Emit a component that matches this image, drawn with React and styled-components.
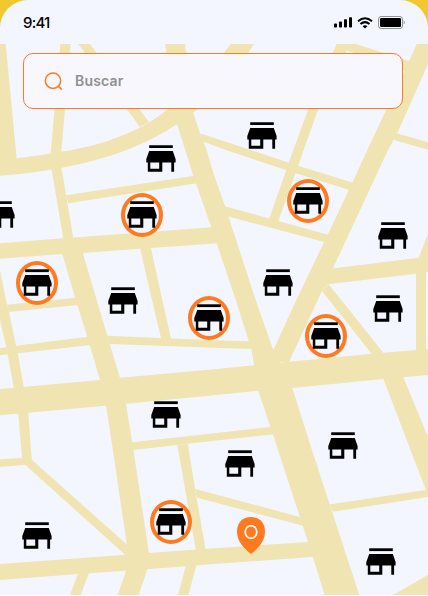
import React from 'react';
import styled, { createGlobalStyle, css } from 'styled-components';

const GlobalStyle = createGlobalStyle`
  *, *::before, *::after { box-sizing: border-box; }
  html, body { margin: 0; padding: 0; background: #fff; }
`;

const colors = {
  land: '#f3f6ff',
  road: '#f0e5b2',
  accent: '#ff7a1f',
  field: '#f8f7fd',
  backdrop: '#f1c92f',
};

const Backdrop = styled.div`
  width: 428px;
  height: 595px;
  background: ${colors.backdrop};
`;

const Screen = styled.main`
  display: flex;
  flex-direction: column;
  height: 100%;
  overflow: hidden;
  background: ${colors.land};
  border-radius: 28px 28px 0 0;
  font-family: Inter, 'Liberation Sans', sans-serif;
`;

const StatusBar = styled.header`
  display: flex;
  flex: none;
  align-items: center;
  justify-content: space-between;
  height: 44px;
  padding: 1px 23px 0 23px;
`;

const Clock = styled.time`
  font-size: 15px;
  font-weight: 550;
  line-height: 18px;
  letter-spacing: -0.8px;
  color: #000;
`;

const StatusIcons = styled.div`
  display: flex;
  align-items: center;
  gap: 5px;
  svg { display: block; }
`;

const MapArea = styled.section`
  position: relative;
  flex: none;
  height: 551px;
  padding: 9px 25px 0 23px;
  overflow: hidden;
`;

const Streets = styled.svg`
  position: absolute;
  inset: 0;
  display: block;
  fill: ${colors.road};
`;

const SearchField = styled.label`
  position: relative;
  display: flex;
  align-items: center;
  gap: 11px;
  height: 56px;
  padding: 0 20px;
  background: ${colors.field};
  border: 1px solid ${colors.accent};
  border-radius: 10px;
  svg { display: block; flex: none; }
`;

const SearchInput = styled.input`
  flex: 1;
  min-width: 0;
  padding: 0;
  border: 0;
  outline: 0;
  background: transparent;
  font-family: inherit;
  font-size: 14px;
  font-weight: 600;
  line-height: 20px;
  letter-spacing: 0.2px;
  color: #333;
  &::placeholder { color: #909090; opacity: 1; }
`;

const Marker = styled.div`
  position: absolute;
  left: ${(p) => p.$x}px;
  top: ${(p) => p.$y - 44}px;
  svg { display: block; }
  ${(p) => p.$active && css`
    width: 42px;
    height: 44px;
    padding: 4px 0 0 2.2px;
    border: 4px solid ${colors.accent};
    border-radius: 50%;
    background: ${colors.land};
  `}
`;

const roads = [
  '0,44 5.7,44 16.7,159 0,164',
  '60.3,44 70.7,44 61.3,152 61.5,168 73.3,238 63.3,239 51.7,170 50.7,153',
  '78.3,44 90,44 149,122 140,127',
  '165,44 185,44 192.7,111 200,133.3 206.7,150 214,175 225.3,206.7 255.7,300 273.3,350 292.3,388 312,450 329.7,504.3 359.3,595 324.7,595 308,542 276.7,446 258.3,390.7 251.3,349 235.7,300 216.7,243.3 193.3,175.7 177,124',
  '66,195.3 194,175.7 197,183.3 68.3,203.3',
  '0,243.3 63.3,238.3 212,227.3 218,243.3 150.7,248 82.7,253 62.7,254 0,258.7',
  '62,253 82.7,252.5 96.7,300 107.3,335.7 120,378 126,403.7 132.3,442.3 149,553.3 147.3,569.3 138.7,595 117.7,595 126,571 127,546 112.4,447 106,405.7 100,380 87.3,336.7 75,297.7',
  '0,389 100,380 120,377.7 214,369.3 256.7,365 289.3,361.7 372.3,353.7 416,350 428,349 428,375 383.3,379 292.3,388 258.3,390.7 214,395.3 106,405.7 0,415.3',
  '0,564 126,554.7 149,553 214,548.3 310,541.8 315,556.8 214,564 147.3,569.3 78.3,574 0,580',
  '78.3,573 89.3,572 80.7,595 70,595',
  '186,565 196.7,564 188.5,595 178,595',
  '18.2,413 28.2,412 31,450 32,460 128,545.5 126,555.5 25.3,465 0,467 0,459.3 22,458 21.3,450',
  '0,270 6,300 9,312 17.7,353.3 24,388 14,389 6.3,347.7 0,320',
  '6.7,304.7 76,297.7 78.5,305 9,312',
  '0,348.3 15.7,345.7 88,336.7 91,345 17.7,353.3 0,355.3',
  '140,248 150.7,247 162.3,300 171.3,340 161.3,339.5 152,300',
  '107,335.7 161,338 214,340.3 250,341.3 252,349 214,347.7 109.5,344',
  '200,133.3 250.7,150 298,165.7 353,182.7 350,190.3 295.7,173.3 225.7,150 203,141.5',
  '336.7,44 347,50 318.3,109 303.7,150 278,222 269,219 293.3,150 308.3,109',
  '336.7,44 355.7,44 410,61.3 405,71 345.7,50 335,51',
  '416.7,44 428,44 428,64 397.3,133.3 388,150 333,268.3 317.7,300 289,362 270,362 273.3,350 296.3,300 324,242.3 352.3,182.7 367.3,150 409,61.3',
  '397,133.3 428,142.3 428,149.7 392,139.5',
  '224,206 328,234.7 325,242.3 227.5,216.3',
  '332,268.5 418.7,257.7 428,233.3 428,272 416,273.7 328,284.3 320,292 315,285',
  '322,291 328.3,284.3 341.3,300 383.5,353 372.5,355',
  '416,273 426,272 426,350 416,351',
  '383,378 403,376.5 428,437 428,495 425.5,489',
  '329,504.4 425.5,490 428,489.5 428,497 333,511.7',
  '393,595 428,575 428,595',
  '132,442.3 214,433.3 271,426.7 274,434.3 214,440.7 133,450',
  '177.3,445 187.8,444 195,488.7 205.7,550 196,551',
  '195,488.7 300,517 304,526 197,497.7',
];

// The avenue that sweeps from the west edge up to the north.
const curvedAvenue =
  'M0 160L16.7 158.3Q44 155 72 150Q110 143 141.7 126.7Q157 118 168 109Q200 85 230.7 44H254Q222 95 177 124.3Q155 139 127 150Q98 161 61 168Q30 173.5 0 175.7Z';

const shops = [
  { x: 247.3, y: 122 },
  { x: 146.3, y: 145 },
  { x: -14.7, y: 201 },
  { x: 378.3, y: 222 },
  { x: 263.3, y: 269 },
  { x: 108.3, y: 287 },
  { x: 373.3, y: 295 },
  { x: 151.3, y: 401 },
  { x: 328.3, y: 432 },
  { x: 225.3, y: 450 },
  { x: 22.3, y: 522 },
  { x: 366.3, y: 548 },
  { x: 121, y: 193, active: true },
  { x: 287, y: 179, active: true },
  { x: 16, y: 261, active: true },
  { x: 188, y: 296, active: true },
  { x: 305, y: 314, active: true },
  { x: 150, y: 500, active: true },
];

const ShopIcon = () => (
  <svg width="30" height="27" viewBox="0 0 30 27" aria-label="Tienda">
    <path d="M3.2 0.3h23.6v2.8H3.2z" />
    <path
      fillRule="evenodd"
      d="M3.2 5.9h23.6l2.8 8.2v3.300h-1.500v9.400h-2.800v-9.400h-9v9.400H1.800v-9.400H0.300v-3.300zM4.300 17.600v6.200h8.900v-6.200z"
    />
  </svg>
);

const PinIcon = () => (
  <svg width="28" height="37" viewBox="0 0 28 37">
    <path
      fill={colors.accent}
      d="M14 0C5.5 0 0 5.7 0 14.8C0 24 6.5 31 14 37C21.5 31 28 24 28 14.8C28 5.7 22.5 0 14 0Z"
    />
    <ellipse cx="14" cy="15" rx="5.8" ry="6.3" fill="none" stroke="#fff" strokeWidth="1.7" />
  </svg>
);

const SearchIcon = () => (
  <svg width="20" height="20" viewBox="0 0 20 20" fill="none" stroke={colors.accent} strokeWidth="1.5">
    <circle cx="9" cy="9.7" r="7.7" />
    <path d="M14.3 15.100l3 3" strokeLinecap="round" />
  </svg>
);

const SignalIcon = () => (
  <svg width="18" height="11" viewBox="0 0 18 11">
    <rect x="0" y="6.5" width="3" height="4" rx="0.8" />
    <rect x="5" y="4.5" width="3" height="6" rx="0.8" />
    <rect x="10" y="2.3" width="3" height="8.2" rx="0.8" />
    <rect x="15" y="0.3" width="3" height="10.2" rx="0.8" />
  </svg>
);

const WifiIcon = () => (
  <svg width="16" height="12" viewBox="0 0 16 12" fill="none" stroke="#000" strokeWidth="2">
    <path d="M1 4.3Q8 -1.8 15 4.3" />
    <path d="M3.5 7.1Q8 3.2 12.5 7.1" />
    <path d="M5.6 9.2Q8 7.3 10.4 9.2L8 11.6z" fill="#000" stroke="none" />
  </svg>
);

const BatteryIcon = () => (
  <svg width="27" height="13" viewBox="0 0 27 13">
    <rect x="0.5" y="0.5" width="24" height="12" rx="2.6" fill="none" stroke="#000" strokeOpacity="0.4" />
    <rect x="2" y="2" width="21" height="9" rx="1.3" />
    <path d="M25.7 4.5v4q1.1-.6 1.1-2t-1.1-2z" fillOpacity="0.4" />
  </svg>
);

export default function App() {
  return (
    <>
      <GlobalStyle />
      <Backdrop>
        <Screen>
          <StatusBar>
            <Clock>9:41</Clock>
            <StatusIcons>
              <SignalIcon />
              <WifiIcon />
              <BatteryIcon />
            </StatusIcons>
          </StatusBar>
          <MapArea>
            <Streets width="428" height="551" viewBox="0 44 428 551">
              {roads.map((points) => <polygon key={points} points={points} />)}
              <path d={curvedAvenue} />
            </Streets>
            {shops.map((shop) => (
              <Marker key={`${shop.x}-${shop.y}`} $x={shop.x} $y={shop.y} $active={shop.active}>
                <ShopIcon />
              </Marker>
            ))}
            <Marker $x={237} $y={517}><PinIcon /></Marker>
            <SearchField>
              <SearchIcon />
              <SearchInput type="search" placeholder="Buscar" aria-label="Buscar" />
            </SearchField>
          </MapArea>
        </Screen>
      </Backdrop>
    </>
  );
}
